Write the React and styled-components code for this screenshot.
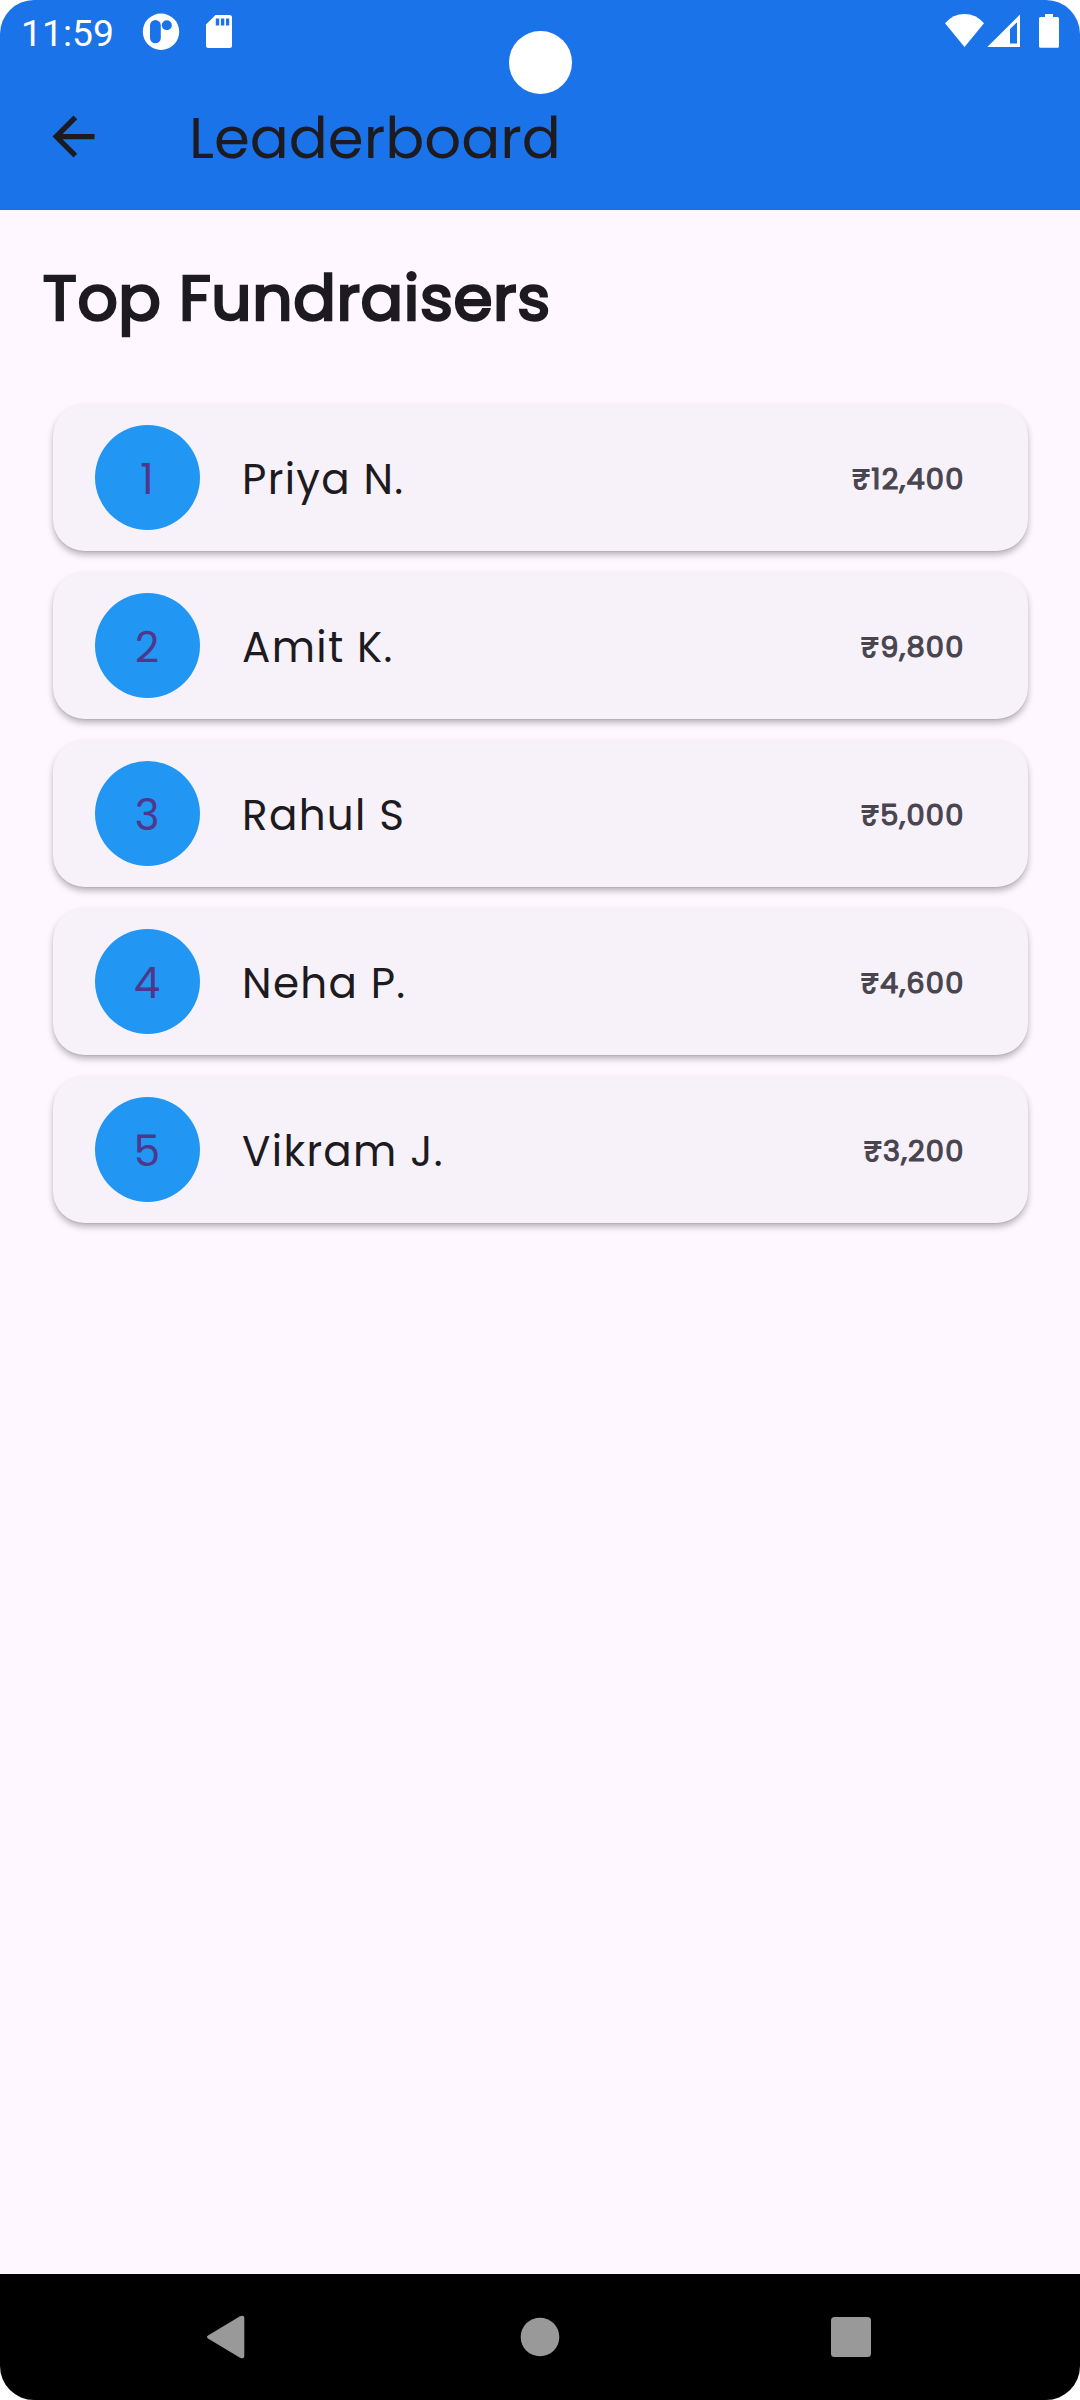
import React from "react";
import styled, { createGlobalStyle } from "styled-components";

const GlobalStyle = createGlobalStyle`
  * { box-sizing: border-box; }
  html, body { margin: 0; padding: 0; background: #ffffff; }
`;

const Screen = styled.div`
  width: 1080px;
  height: 2400px;
  display: flex;
  flex-direction: column;
  overflow: hidden;
  border-radius: 34px;
  background: #fef7ff;
  color: #1d1b20;
  font-family: Poppins, Inter, "Open Sans", sans-serif;
  white-space: nowrap;
`;

const TopArea = styled.header`
  position: relative;
  height: 210px;
  flex: none;
  background: #1a73e8;
`;

const StatusBar = styled.div`
  height: 63px;
  display: flex;
  align-items: flex-start;
  justify-content: space-between;
  padding: 12px 19px 0 21px;
`;

const StatusGroup = styled.div`
  display: flex;
  align-items: flex-start;
`;

const Clock = styled.span`
  width: 121px;
  height: 38px;
  padding-top: 1px;
  font: 400 37.3px/41px Roboto, sans-serif;
  color: #ffffff;
`;

const Icon = styled.svg`
  display: block;
  flex: none;
  width: ${(p) => p.$w}px;
  height: ${(p) => p.$h}px;
  margin-left: ${(p) => p.$gap || 0}px;
`;

const Camera = styled.div`
  position: absolute;
  left: 509.3px;
  top: 31.2px;
  width: 62.5px;
  height: 62.5px;
  border-radius: 50%;
  background: #ffffff;
`;

const AppBar = styled.div`
  height: 147px;
  display: flex;
  align-items: center;
  padding-left: 42px;
`;

const Title = styled.h1`
  margin: 0 0 0 84px;
  padding-top: 2px;
  font-size: 57.75px;
  line-height: 80px;
  font-weight: 400;
`;

const Content = styled.main`
  flex: 1;
  padding: 42px;
`;

const Heading = styled.h2`
  margin: 0;
  padding-left: 0.7px;
  font-size: 63px;
  line-height: 92px;
  font-weight: 400;
  letter-spacing: 0.62px;
  -webkit-text-stroke: 2.6px #1d1b20;
`;

const List = styled.ul`
  list-style: none;
  margin: 60.25px 10.5px 0;
  padding: 0;
  display: flex;
  flex-direction: column;
  gap: 21px;
`;

const Card = styled.li`
  height: 147px;
  display: flex;
  align-items: center;
  padding: 0 63px 0 42px;
  border-radius: 31.5px;
  background: #f7f2fa;
  box-shadow: 0 4px 6px rgba(0, 0, 0, 0.27), 0 1px 1px rgba(0, 0, 0, 0.07);
`;

const Rank = styled.span`
  width: 105px;
  height: 105px;
  padding-top: 4px;
  display: grid;
  place-items: center;
  border-radius: 50%;
  background: #2196f3;
  color: #4f378b;
  font-size: 42px;
  line-height: 60px;
`;

const Name = styled.span`
  flex: 1;
  margin-left: 42.6px;
  padding-top: 4px;
  font-size: 42px;
  line-height: 60px;
  letter-spacing: 1.31px;
`;

const Amount = styled.span`
  padding-top: 2px;
  font-size: 28.875px;
  line-height: 42px;
  font-weight: 400;
  letter-spacing: 1.2px;
  color: #49454f;
  -webkit-text-stroke: 1.2px #49454f;
`;

const NavBar = styled.nav`
  height: 126px;
  flex: none;
  display: flex;
  align-items: center;
  padding-left: 206px;
  background: #000000;
`;

const fundraisers = [
  { name: "Priya N.", amount: "₹12,400" },
  { name: "Amit K.", amount: "₹9,800" },
  { name: "Rahul S", amount: "₹5,000" },
  { name: "Neha P.", amount: "₹4,600" },
  { name: "Vikram J.", amount: "₹3,200" },
];

export default function App() {
  return (
    <>
      <GlobalStyle />
      <Screen>
        <TopArea>
          <StatusBar>
            <StatusGroup>
              <Clock>11:59</Clock>
              <Icon $w={38} $h={38} viewBox="142 12 38 38">
                <circle cx="161" cy="31.7" r="18.2" fill="#fff" />
                <rect x="150" y="20" width="10.8" height="23.3" rx="5.4" fill="#1a73e8" />
                <circle cx="166.8" cy="25.2" r="5" fill="#1a73e8" />
              </Icon>
              <Icon $w={28} $h={38} $gap={25} viewBox="205 12 28 38">
                <path d="M215.5 15H229.5Q232 15 232 17.5V45.5Q232 48 229.5 48H208.5Q206 48 206 45.5V24.5Z" fill="#fff" />
                <path d="M215.8 18.5h3.4v7h-3.4zM220.9 18.5h3.4v7h-3.4zM226 18.5h3.2v7H226z" fill="#1a73e8" />
              </Icon>
            </StatusGroup>
            <StatusGroup>
              <Icon $w={40} $h={38} viewBox="945 12 40 38">
                <path d="M945 23.2Q953 14 964.5 14T984 23.2L964.5 47Z" fill="#fff" />
              </Icon>
              <Icon $w={34} $h={38} $gap={2} viewBox="987 12 34 38">
                <path fillRule="evenodd" d="M1020 14.5V47H987.3ZM1017 22.2L1010 29V43.5H1017Z" fill="#fff" />
              </Icon>
              <Icon $w={22} $h={38} $gap={18} viewBox="1039 12 22 38">
                <path d="M1045 14H1053V17H1057.5Q1059 17 1059 18.5V46.3Q1059 47.8 1057.5 47.8H1040.5Q1039 47.8 1039 46.3V18.5Q1039 17 1040.5 17H1045Z" fill="#fff" />
              </Icon>
            </StatusGroup>
          </StatusBar>
          <AppBar>
            <Icon $w={63} $h={63} viewBox="0 0 24 24">
              <path d="M20 11H7.83l5.59-5.59L12 4l-8 8 8 8 1.41-1.41L7.83 13H20v-2z" fill="#1d1b20" />
            </Icon>
            <Title>Leaderboard</Title>
          </AppBar>
          <Camera />
        </TopArea>
        <Content>
          <Heading>Top Fundraisers</Heading>
          <List>
            {fundraisers.map((f, i) => (
              <Card key={f.name}>
                <Rank>{i + 1}</Rank>
                <Name>{f.name}</Name>
                <Amount>{f.amount}</Amount>
              </Card>
            ))}
          </List>
        </Content>
        <NavBar>
          <Icon $w={40} $h={44} viewBox="206 2315 40 44">
            <path d="M208 2335.5L240 2316.2Q244.3 2314.6 244.3 2318V2356Q244.3 2359.4 240 2357.8L208 2338.5Q206 2337 208 2335.5Z" fill="#999" />
          </Icon>
          <Icon $w={40} $h={40} $gap={274} viewBox="0 0 40 40">
            <circle cx="20" cy="20" r="19.3" fill="#999" />
          </Icon>
          <Icon $w={40} $h={40} $gap={271} viewBox="0 0 40 40">
            <rect x="0" y="0" width="40" height="40" rx="3.5" fill="#999" />
          </Icon>
        </NavBar>
      </Screen>
    </>
  );
}
